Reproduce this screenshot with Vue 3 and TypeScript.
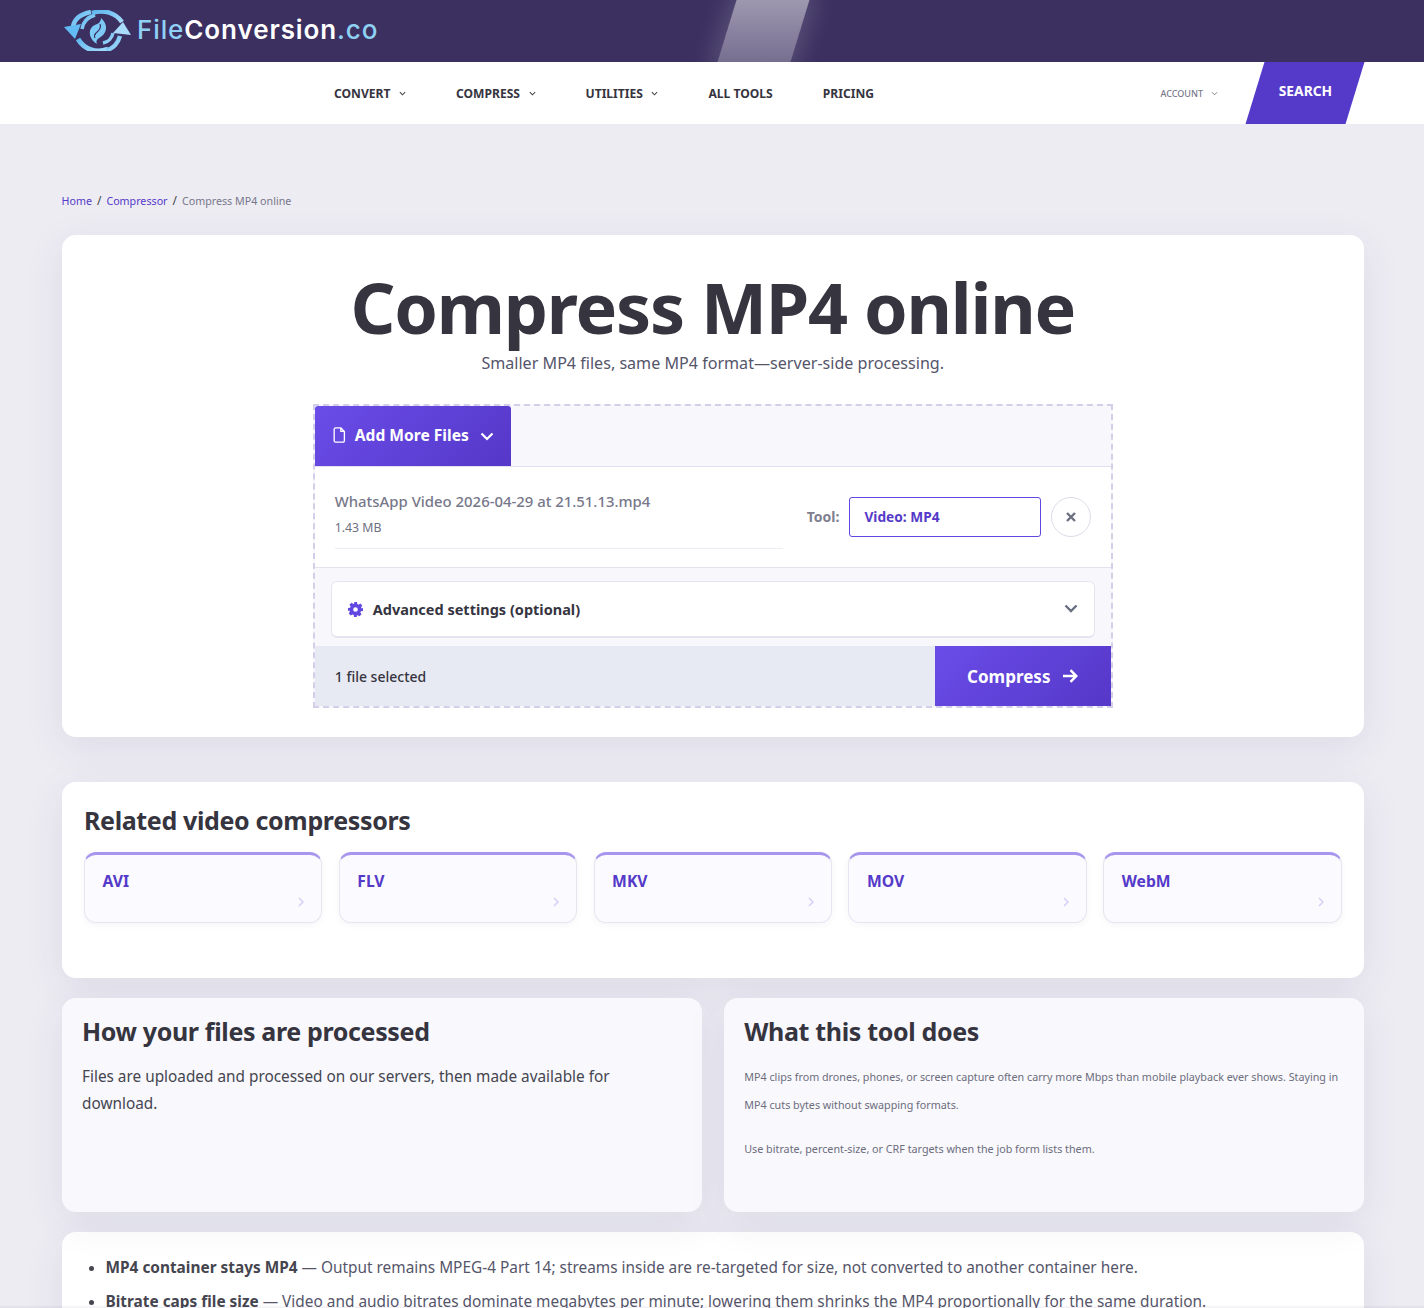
<script setup lang="ts">
const navItems = [
  { label: 'CONVERT', caret: true },
  { label: 'COMPRESS', caret: true },
  { label: 'UTILITIES', caret: true },
  { label: 'ALL TOOLS', caret: false },
  { label: 'PRICING', caret: false },
]

const related = ['AVI', 'FLV', 'MKV', 'MOV', 'WebM']
</script>

<template>
  <div class="page">
    <header class="topbar">
      <div class="shine"></div>
      <a class="logo">
        <svg class="logo-mark" viewBox="4 5 68 41" width="68" height="41">
          <defs>
            <linearGradient id="lg" x1="0" y1="0" x2="1" y2="1">
              <stop offset="0" stop-color="#5fb8f0" />
              <stop offset="1" stop-color="#a8dcfa" />
            </linearGradient>
          </defs>
          <g fill="none" stroke="url(#lg)">
            <path d="M13 22C14 14 21 9 31 7" stroke-width="4.500" />
            <path d="M22 24C23 17 28 12 35 10" stroke-width="3.500" />
            <path d="M32 8C44 4 56 8 62 17" stroke-width="4.500" />
            <path d="M18 34C24 44 36 49 48 44" stroke-width="5" />
            <path d="M46 45C53 44 58 38 60 31" stroke-width="4.500" />
            <path d="M43 38C48 37 52 33 53 28" stroke-width="3.500" />
          </g>
          <path d="M4 22L21 19 15 34z" fill="#62bbf3" />
          <path d="M71 30L63 17 53 28z" fill="#a9dcfa" />
          <path d="M41 13C49 20 47 29 39 33 36 35 36 37 37 39 30 35 27 26 33 21 37 19 41 18 41 13z" fill="#7ecaf6" />
          <path d="M40 19C42 24 38 26 36 28 35 29 34 31 35 33" fill="none" stroke="#3b3060" stroke-width="1.200" />
        </svg>
        <span class="logo-text"><em>File</em>Conversion<em>.co</em></span>
      </a>
    </header>

    <nav class="navbar">
      <ul class="nav-list">
        <li v-for="item in navItems" :key="item.label" class="nav-item">
          {{ item.label }}
          <svg v-if="item.caret" class="caret" viewBox="0 0 8 5" width="7" height="5">
            <path d="M1 1l3 3 3-3" fill="none" stroke="#444" stroke-width="1.2" />
          </svg>
        </li>
      </ul>
      <div class="account">
        ACCOUNT
        <svg class="caret" viewBox="0 0 8 5" width="7" height="5">
          <path d="M1 1l3 3 3-3" fill="none" stroke="#777" stroke-width="1" />
        </svg>
      </div>
      <div class="search"><span>SEARCH</span></div>
    </nav>

    <main class="content">
      <div class="crumbs">
        <a>Home</a><i>/</i><a>Compressor</a><i>/</i><span>Compress MP4 online</span>
      </div>

      <section class="card hero">
        <h1>Compress MP4 online</h1>
        <p class="sub">Smaller MP4 files, same MP4 format—server-side processing.</p>

        <div class="uploader">
          <div class="tabs">
            <button class="add-btn">
              <svg viewBox="0 0 14 18" width="13" height="16">
                <path d="M2.5 1h6l4 4v10.5a1.5 1.5 0 0 1-1.5 1.5H2.5A1.5 1.5 0 0 1 1 15.500v-13A1.500 1.500 0 0 1 2.500 1zM8.500 1v4h4" fill="none" stroke="#fff" stroke-width="1.500" />
              </svg>
              <span>Add More Files</span>
              <svg class="add-caret" viewBox="0 0 14 9" width="14" height="9">
                <path d="M1.500 1.500L7 7l5.500-5.500" fill="none" stroke="#fff" stroke-width="2.200" />
              </svg>
            </button>
          </div>

          <div class="file-row">
            <div class="file-info">
              <div class="file-name">WhatsApp Video 2026-04-29 at 21.51.13.mp4</div>
              <div class="file-size">1.43 MB</div>
            </div>
            <span class="tool-label">Tool:</span>
            <div class="tool-select">Video: MP4</div>
            <button class="remove">
              <svg viewBox="0 0 10 10" width="10" height="10">
                <path d="M1 1l8 8M9 1l-8 8" stroke="#6b7080" stroke-width="2.400" />
              </svg>
            </button>
          </div>

          <div class="advanced-wrap">
            <div class="advanced">
              <svg viewBox="0 0 16 16" width="15" height="15">
                <path fill="#6247e3" fill-rule="evenodd" d="M6.500 0h3l.4 2.200 1.300.6L13.100 1.600l2.100 2.100-1.200 1.900.6 1.300L16 6.500v3l-2.200.4-.6 1.300 1.200 1.900-2.100 2.100-1.900-1.200-1.300.6L9.500 16h-3l-.4-2.200-1.300-.6-1.900 1.200-2.100-2.100 1.200-1.900-.6-1.300L0 9.500v-3l2.200-.4.6-1.300L1.600 2.900 3.700.8l1.900 1.200 1.300-.6zM8 5.500a2.500 2.500 0 1 0 0 5 2.500 2.500 0 0 0 0-5z" />
              </svg>
              <span>Advanced settings (optional)</span>
              <svg class="adv-caret" viewBox="0 0 14 9" width="14" height="9">
                <path d="M1.500 1.500L7 7l5.500-5.500" fill="none" stroke="#6b7080" stroke-width="2.400" />
              </svg>
            </div>
          </div>

          <div class="action-bar">
            <span class="count">1 file selected</span>
            <button class="compress-btn">
              <span>Compress</span>
              <svg viewBox="0 0 16 14" width="16" height="14">
                <path d="M1 7h13M8.500 1.200L14.300 7l-5.800 5.800" fill="none" stroke="#fff" stroke-width="2.500" />
              </svg>
            </button>
          </div>
        </div>
      </section>

      <section class="card related">
        <h2>Related video compressors</h2>
        <div class="related-grid">
          <a v-for="name in related" :key="name" class="related-item">
            <span>{{ name }}</span>
            <svg viewBox="0 0 6 10" width="6" height="10">
              <path d="M1 1l4 4-4 4" fill="none" stroke="#d5cff5" stroke-width="1.500" />
            </svg>
          </a>
        </div>
      </section>

      <div class="two-col">
        <section class="card soft">
          <h2>How your files are processed</h2>
          <p class="lead">Files are uploaded and processed on our servers, then made available for download.</p>
        </section>
        <section class="card soft">
          <h2>What this tool does</h2>
          <p class="small">MP4 clips from drones, phones, or screen capture often carry more Mbps than mobile playback ever shows. Staying in MP4 cuts bytes without swapping formats.</p>
          <p class="small">Use bitrate, percent-size, or CRF targets when the job form lists them.</p>
        </section>
      </div>

      <section class="card points">
        <ul>
          <li><b>MP4 container stays MP4</b> — Output remains MPEG-4 Part 14; streams inside are re-targeted for size, not converted to another container here.</li>
          <li><b>Bitrate caps file size</b> — Video and audio bitrates dominate megabytes per minute; lowering them shrinks the MP4 proportionally for the same duration.</li>
        </ul>
      </section>
    </main>
  </div>
</template>

<style>
html,
body {
  margin: 0;
  height: 1308px;
  overflow: hidden;
  background: #edecf3;
}
</style>

<style scoped>
.page {
  font-family: "Noto Sans", "Open Sans", sans-serif;
  color: #35343f;
  height: 1308px;
  overflow: hidden;
  position: relative;
}

/* faint edge along the bottom of the window */
.page::after {
  content: "";
  position: absolute;
  left: 0;
  right: 0;
  bottom: 0;
  height: 3px;
  background: linear-gradient(180deg, rgba(60, 50, 110, 0), rgba(60, 50, 110, 0.08));
}

.topbar {
  position: relative;
  height: 62px;
  background: #3b3060;
  overflow: hidden;
  padding-left: 64px;
  display: flex;
  align-items: center;
}

.shine {
  position: absolute;
  top: 0;
  left: 727px;
  width: 73px;
  height: 62px;
  transform: skewX(-17deg);
  background: linear-gradient(180deg, rgba(255, 255, 255, 0.5), rgba(255, 255, 255, 0.3));
  box-shadow: 0 0 22px 8px rgba(255, 255, 255, 0.14);
}

.logo {
  display: flex;
  align-items: center;
  gap: 5px;
  margin-top: -1px;
}

.logo-text {
  font-family: Inter, sans-serif;
  font-size: 26px;
  line-height: 30px;
  font-weight: 600;
  color: #fff;
  letter-spacing: 0.9px;
  margin-top: -2px;
}

.logo-text em {
  font-style: normal;
  font-weight: 500;
  color: #8fd0f5;
}

.navbar {
  height: 62px;
  background: #fff;
  display: flex;
  align-items: center;
  padding-left: 334px;
  padding-right: 69px;
}

.nav-list {
  list-style: none;
  display: flex;
  align-items: center;
  gap: 50px;
  margin: 0;
  padding: 0;
  flex: 1;
}

.nav-item {
  font-size: 12.100px;
  font-weight: 700;
  color: #35343f;
  display: flex;
  align-items: center;
  gap: 8.500px;
}

.account {
  font-size: 9px;
  font-weight: 500;
  color: #77778a;
  display: flex;
  align-items: center;
  gap: 8px;
  margin-right: 37px;
}

.search {
  width: 100px;
  height: 62px;
  background: #553ac9;
  color: #fff;
  font-size: 13.800px;
  font-weight: 700;
  display: flex;
  align-items: center;
  justify-content: center;
  transform: skewX(-17deg);
  transform-origin: center;
}

.search span {
  display: block;
  transform: skewX(17deg);
  margin-top: -5px;
}

.content {
  padding: 0 60px 0 61.500px;
}

.crumbs {
  padding-top: 70px;
  height: 41px;
  font-size: 10.700px;
  line-height: 14px;
  color: #77778a;
}

.crumbs a {
  color: #553ac9;
}

.crumbs i {
  font-style: normal;
  color: #444;
  margin: 0 5px;
  font-size: 12px;
}

.card {
  background: #fff;
  border-radius: 14px;
  box-shadow: 0 10px 40px rgba(60, 50, 110, 0.085);
}

.hero {
  box-sizing: border-box;
  height: 502px;
  padding-top: 34px;
  display: flex;
  flex-direction: column;
  align-items: center;
}

.hero h1 {
  margin: 0;
  font-size: 70px;
  line-height: 76px;
  font-weight: 700;
  color: #35343f;
  letter-spacing: -1.2px;
}

.sub {
  margin: 6px 0 0;
  font-size: 16.100px;
  line-height: 24px;
  color: #55556a;
}

.uploader {
  box-sizing: border-box;
  width: 800px;
  height: 304px;
  margin-top: 29px;
  border: 2px dashed #d4cfe8;
  background: #f7f7fc;
  display: flex;
  flex-direction: column;
}

.tabs {
  height: 61px;
  flex: none;
  box-sizing: border-box;
  border-bottom: 1px solid #e2e0f0;
}

.add-btn {
  width: 196px;
  height: 60px;
  border: 0;
  padding: 0 0 2px 18px;
  border-radius: 3px 3px 0 0;
  background: linear-gradient(135deg, #6a4ce8, #5538c8);
  color: #fff;
  font: 700 15.600px "Noto Sans", sans-serif;
  display: flex;
  align-items: center;
  gap: 9px;
}

.add-caret {
  margin-left: 2px;
  margin-top: 2px;
}

.file-row {
  box-sizing: border-box;
  height: 101px;
  flex: none;
  background: #fff;
  border-bottom: 1px solid #e2e2f0;
  display: flex;
  align-items: center;
  padding: 0 19px 0 20px;
}

.file-info {
  width: 448px;
  height: 82px;
  box-sizing: border-box;
  border-bottom: 1px solid #ececf3;
  margin-right: 24px;
  margin-top: -19px;
  padding-top: 24px;
}

.file-name {
  font-size: 14.900px;
  line-height: 20px;
  font-weight: 500;
  color: #77778a;
}

.file-size {
  font-size: 12.300px;
  line-height: 16px;
  margin-top: 9px;
  color: #6d7080;
}

.tool-label {
  font-size: 14px;
  font-weight: 700;
  color: #80808f;
  margin-right: 10px;
  margin-top: -1px;
}

.tool-select {
  box-sizing: border-box;
  width: 192px;
  height: 40px;
  border: 1px solid #6247e3;
  border-radius: 3px;
  background: #fff;
  color: #553ac9;
  font-size: 13.700px;
  font-weight: 700;
  line-height: 38px;
  padding-left: 14px;
}

.remove {
  box-sizing: border-box;
  width: 40px;
  height: 40px;
  margin-left: 10px;
  border-radius: 50%;
  border: 1px solid #dcdcea;
  background: #fff;
  display: flex;
  align-items: center;
  justify-content: center;
  padding: 0;
}

.advanced-wrap {
  flex: none;
  height: 78px;
  box-sizing: border-box;
  padding: 13px 16px 9px;
}

.advanced {
  box-sizing: border-box;
  height: 57px;
  background: #fff;
  border: 1px solid #e4e5ef;
  border-bottom-width: 2px;
  border-radius: 6px;
  display: flex;
  align-items: center;
  padding: 0 16px;
  gap: 10px;
  font-size: 14.500px;
  font-weight: 700;
  color: #35343f;
}

.adv-caret {
  margin-left: auto;
  margin-top: -2px;
}

.action-bar {
  flex: 1;
  display: flex;
  align-items: center;
  justify-content: space-between;
  background: #e8eaf3;
  padding-left: 20px;
}

.count {
  font-size: 14px;
  font-weight: 500;
  color: #35343f;
}

.compress-btn {
  width: 176px;
  height: 60px;
  border: 0;
  background: linear-gradient(135deg, #6a4ce8, #5538c8);
  color: #fff;
  font: 700 17px "Noto Sans", sans-serif;
  display: flex;
  align-items: center;
  justify-content: center;
  gap: 12px;
}

.related {
  box-sizing: border-box;
  height: 196px;
  margin-top: 45px;
  padding: 21px 22.500px 0;
}

h2 {
  margin: 0;
  font-size: 25px;
  line-height: 34px;
  font-weight: 700;
  color: #35343f;
  letter-spacing: -0.35px;
}

.related-grid {
  display: grid;
  grid-template-columns: repeat(5, 1fr);
  gap: 16.500px;
  margin-top: 15px;
}

.related-item {
  box-sizing: border-box;
  height: 71px;
  background: #fbfbff;
  border: 1px solid #e6e6f2;
  border-top: 3px solid #a795ee;
  border-radius: 12px;
  box-shadow: 0 2px 6px rgba(60, 50, 110, 0.05);
  padding: 15px 17.500px 0;
  position: relative;
  color: #553ac9;
  font-size: 15.700px;
  line-height: 22px;
  font-weight: 700;
}

.related-item svg {
  position: absolute;
  right: 17px;
  bottom: 15px;
}

.two-col {
  display: grid;
  grid-template-columns: 1fr 1fr;
  gap: 22px;
  margin-top: 20px;
}

.soft {
  box-sizing: border-box;
  height: 214px;
  background: #f8f8fd;
  padding: 16px 20px 0 20.500px;
}

.lead {
  margin: 15px 0 0;
  font-size: 15.350px;
  line-height: 27px;
  color: #45454f;
}

.small {
  margin: 15px 0 16px;
  font-size: 10.750px;
  line-height: 28px;
  color: #6d6d7c;
}

.points {
  margin-top: 20px;
  height: 120px;
  padding: 19px 20px 0 21px;
}

.points ul {
  margin: 0;
  padding-left: 23px;
  font-size: 15.400px;
  line-height: 34px;
  color: #55556a;
}

.points li::marker {
  color: #45454f;
}

.points b {
  color: #45454f;
}
</style>
